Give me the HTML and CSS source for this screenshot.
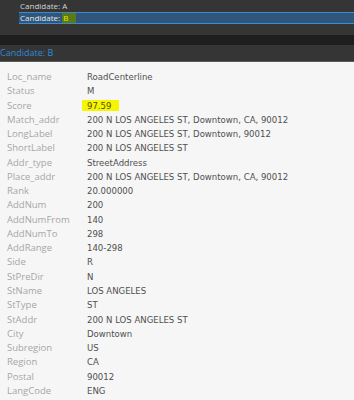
FILE: index.html
```html
<!DOCTYPE html>
<html lang="en">
  <head>
    <meta charset="UTF-8" />
    <title>Candidate</title>
    <link rel="stylesheet" href="styles.css">
  </head>
  <body>
    <div class="candidates">
      <div class="candidate">Candidate: A</div>
      <div class="candidate selected">Candidate: <span class="hit">B</span></div>
    </div>
    <div class="divider"></div>
    <div class="panel-title">Candidate: B</div>

    <div class="attrs">
      <span class="key">Loc_name</span><span class="val">RoadCenterline</span>
      <span class="key">Status</span><span class="val">M</span>
      <span class="key">Score</span><span class="val"><span class="mark">97.59</span></span>
      <span class="key">Match_addr</span><span class="val">200 N LOS ANGELES ST, Downtown, CA, 90012</span>
      <span class="key">LongLabel</span><span class="val">200 N LOS ANGELES ST, Downtown, 90012</span>
      <span class="key">ShortLabel</span><span class="val">200 N LOS ANGELES ST</span>
      <span class="key">Addr_type</span><span class="val">StreetAddress</span>
      <span class="key">Place_addr</span><span class="val">200 N LOS ANGELES ST, Downtown, CA, 90012</span>
      <span class="key">Rank</span><span class="val">20.000000</span>
      <span class="key">AddNum</span><span class="val">200</span>
      <span class="key">AddNumFrom</span><span class="val">140</span>
      <span class="key">AddNumTo</span><span class="val">298</span>
      <span class="key">AddRange</span><span class="val">140-298</span>
      <span class="key">Side</span><span class="val">R</span>
      <span class="key">StPreDir</span><span class="val">N</span>
      <span class="key">StName</span><span class="val">LOS ANGELES</span>
      <span class="key">StType</span><span class="val">ST</span>
      <span class="key">StAddr</span><span class="val">200 N LOS ANGELES ST</span>
      <span class="key">City</span><span class="val">Downtown</span>
      <span class="key">Subregion</span><span class="val">US</span>
      <span class="key">Region</span><span class="val">CA</span>
      <span class="key">Postal</span><span class="val">90012</span>
      <span class="key">LangCode</span><span class="val">ENG</span>
    </div>
  </body>
</html>
```

FILE: styles.css
```css
body {
  margin: 0;
  background-color: #f6f6f6;
  font-family: "DejaVu Sans Condensed", "DejaVu Sans", sans-serif;
  overflow: hidden;
}
.candidates {
  background-color: #353535;
  height: 35px;
  box-sizing: border-box;
}
.candidate {
  margin-left: 19px;
  height: 12px;
  line-height: 12px;
  padding-left: 1px;
  font-family: "Open Sans", sans-serif;
  font-size: 8px;
  color: #d4d4d4;
  box-sizing: border-box;
}
.candidate.selected {
  background-color: #30577b;
  border-top: 1px solid #3c8ad0;
  border-bottom: 1px solid #3c8ad0;
  line-height: 10px;
  color: #e8e8e8;
}
.hit {
  display: inline-block;
  background-color: #5b7a12;
  color: #e8e800;
  padding: 0 8px 0 1px;
}
.divider {
  height: 10px;
  background-color: #1e1e1e;
}
.panel-title {
  height: 16px;
  line-height: 15px;
  background-color: #353535;
  color: #2f8ad6;
  font-family: "Open Sans", sans-serif;
  font-size: 9px;
  border-bottom: 1px solid #5a5a5a;
}
.attrs {
  display: grid;
  grid-template-columns: 80px auto;
  grid-auto-rows: 14.27px;
  padding: 8px 0 0 7px;
  font-size: 9.5px;
  line-height: 14.27px;
}
.key {
  color: #a6a6a6;
  font-family: "Open Sans", sans-serif;
  font-size: 9.5px;
}
.val {
  color: #505050;
  white-space: nowrap;
}
.mark {
  display: inline-block;
  background-color: #f6f600;
  margin-left: -5px;
  padding: 0 8px 0 5px;
  line-height: 11px;
  color: #555000;
}
```
